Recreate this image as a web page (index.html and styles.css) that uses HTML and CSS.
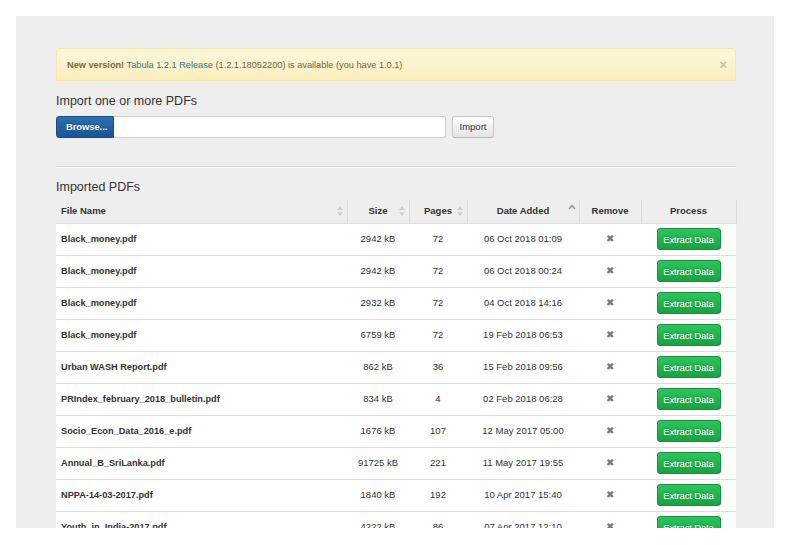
FILE: index.html
```html
<!DOCTYPE html>
<html>
<head>
<meta charset="utf-8">
<link rel="stylesheet" href="styles.css">
</head>
<body>
<div class="panel">
  <div class="alert">
    <span><b>New version!</b> <a class="link">Tabula 1.2.1 Release</a> (1.2.1.18052200) is available (you have 1.0.1)</span>
    <span class="close">×</span>
  </div>
  <h2 class="title">Import one or more PDFs</h2>
  <div class="upload">
    <span class="browse">Browse...</span>
    <span class="filefield"></span>
    <span class="import">Import</span>
  </div>
  <div class="rule"></div>
  <h3 class="subtitle">Imported PDFs</h3>
  <table class="files">
    <colgroup>
      <col class="c-name"><col class="c-size"><col class="c-pages"><col class="c-date"><col class="c-remove"><col class="c-proc">
    </colgroup>
    <thead>
      <tr>
        <th class="left"><span class="hd">File Name</span><svg class="sort" viewBox="0 0 8 12"><path d="M4 1 L7 5 L1 5 Z M4 11 L7 7 L1 7 Z"/></svg></th>
        <th><span class="hd">Size</span><svg class="sort" viewBox="0 0 8 12"><path d="M4 1 L7 5 L1 5 Z M4 11 L7 7 L1 7 Z"/></svg></th>
        <th><span class="hd">Pages</span><svg class="sort" viewBox="0 0 8 12"><path d="M4 1 L7 5 L1 5 Z M4 11 L7 7 L1 7 Z"/></svg></th>
        <th><span class="hd">Date Added</span><svg class="sort up" viewBox="0 0 8 12"><path d="M1 6 L4 2.5 L7 6" /></svg></th>
        <th>Remove</th>
        <th>Process</th>
      </tr>
    </thead>
    <tbody>
      <tr><td class="name">Black_money.pdf</td><td>2942 kB</td><td>72</td><td>06 Oct 2018 01:09</td><td class="x">✖</td><td><span class="extract">Extract Data</span></td></tr>
      <tr><td class="name">Black_money.pdf</td><td>2942 kB</td><td>72</td><td>06 Oct 2018 00:24</td><td class="x">✖</td><td><span class="extract">Extract Data</span></td></tr>
      <tr><td class="name">Black_money.pdf</td><td>2932 kB</td><td>72</td><td>04 Oct 2018 14:16</td><td class="x">✖</td><td><span class="extract">Extract Data</span></td></tr>
      <tr><td class="name">Black_money.pdf</td><td>6759 kB</td><td>72</td><td>19 Feb 2018 06:53</td><td class="x">✖</td><td><span class="extract">Extract Data</span></td></tr>
      <tr><td class="name">Urban WASH Report.pdf</td><td>862 kB</td><td>36</td><td>15 Feb 2018 09:56</td><td class="x">✖</td><td><span class="extract">Extract Data</span></td></tr>
      <tr><td class="name">PRIndex_february_2018_bulletin.pdf</td><td>834 kB</td><td>4</td><td>02 Feb 2018 06:28</td><td class="x">✖</td><td><span class="extract">Extract Data</span></td></tr>
      <tr><td class="name">Socio_Econ_Data_2016_e.pdf</td><td>1676 kB</td><td>107</td><td>12 May 2017 05:00</td><td class="x">✖</td><td><span class="extract">Extract Data</span></td></tr>
      <tr><td class="name">Annual_B_SriLanka.pdf</td><td>91725 kB</td><td>221</td><td>11 May 2017 19:55</td><td class="x">✖</td><td><span class="extract">Extract Data</span></td></tr>
      <tr><td class="name">NPPA-14-03-2017.pdf</td><td>1840 kB</td><td>192</td><td>10 Apr 2017 15:40</td><td class="x">✖</td><td><span class="extract">Extract Data</span></td></tr>
      <tr><td class="name">Youth_in_India-2017.pdf</td><td>4222 kB</td><td>86</td><td>07 Apr 2017 12:10</td><td class="x">✖</td><td><span class="extract">Extract Data</span></td></tr>
    </tbody>
  </table>
</div>
</body>
</html>
```

FILE: styles.css
```css
html, body {
  margin: 0;
  padding: 0;
  background: #ffffff;
}
body {
  padding: 16px;
  font-family: "Liberation Sans", Arial, sans-serif;
  color: #333;
}
.panel {
  width: 680px;
  height: 480px;
  padding: 32px 38px 0 40px;
  background: #eeeeee;
  overflow: hidden;
}
.alert {
  display: flex;
  align-items: center;
  justify-content: space-between;
  height: 31px;
  padding: 0 10px;
  background: linear-gradient(#fcf6db, #f9efbe);
  border: 1px solid #f5e8ad;
  border-radius: 2px;
  font-size: 9.2px;
  color: #6f6646;
}
.alert b {
  color: #7a6a3f;
}
.link {
  color: #3b6fa0;
}
.close {
  color: #c9c2a0;
  font-size: 13px;
  font-weight: bold;
  margin-right: -2px;
}
.title {
  margin: 13px 0 0;
  font-size: 12.5px;
  font-weight: normal;
  line-height: 14px;
  color: #333;
}
.upload {
  display: flex;
  align-items: center;
  margin-top: 7px;
  height: 23px;
}
.browse {
  display: flex;
  align-items: center;
  height: 22px;
  width: 58px;
  box-sizing: border-box;
  padding-left: 9px;
  background: linear-gradient(#2e6fb0, #1b5390);
  border: 1px solid #1a4e86;
  border-radius: 3px 0 0 3px;
  color: #fff;
  font-size: 9.3px;
  font-weight: bold;
  text-shadow: 0 -1px 0 rgba(0,0,0,0.25);
}
.filefield {
  width: 332px;
  height: 22px;
  box-sizing: border-box;
  background: #fff;
  border: 1px solid #cfcfcf;
  border-left: 0;
  border-radius: 0 3px 3px 0;
}
.import {
  display: flex;
  align-items: center;
  justify-content: center;
  margin-left: 6px;
  width: 42px;
  height: 22px;
  box-sizing: border-box;
  background: linear-gradient(#ffffff, #e4e4e4);
  border: 1px solid #c8c8c8;
  border-bottom-color: #b5b5b5;
  border-radius: 3px;
  font-size: 9.5px;
  color: #333;
}
.rule {
  margin-top: 28px;
  height: 0;
  border-top: 1px solid #d8d8d8;
  border-bottom: 1px solid #fafafa;
}
.subtitle {
  margin: 12px 0 0;
  font-size: 12.5px;
  font-weight: normal;
  line-height: 14px;
  color: #333;
}
.files {
  margin-top: 6px;
  width: 680px;
  border-collapse: collapse;
  table-layout: fixed;
  font-size: 9.5px;
}
.c-name { width: 291px; }
.c-size { width: 62px; }
.c-pages { width: 58px; }
.c-date { width: 112px; }
.c-remove { width: 62px; }
.c-proc { width: 95px; }
.files th {
  position: relative;
  height: 23px;
  padding: 0 0 1px;
  box-sizing: border-box;
  border-right: 1px solid #dcdcdc;
  border-bottom: 1px solid #dcdcdc;
  background: #eeeeee;
  font-weight: bold;
  text-align: center;
  color: #333;
}
.files th.left {
  text-align: left;
  padding-left: 5px;
}
.sort {
  position: absolute;
  right: 3px;
  top: 5px;
  width: 8px;
  height: 12px;
  fill: #d0d0d0;
}
.sort.up {
  fill: none;
  stroke: #999;
  stroke-width: 1.6;
  top: 3px;
}
.files td {
  height: 32px;
  padding: 0 0 1px;
  box-sizing: border-box;
  background: #ffffff;
  border-bottom: 1px solid #dddddd;
  text-align: center;
  vertical-align: middle;
  color: #333;
}
.files td.name {
  text-align: left;
  padding-left: 5px;
  font-weight: bold;
  font-size: 9.2px;
  color: #333;
}
.files td.x {
  color: #777;
  font-size: 10px;
}
.extract {
  display: inline-block;
  vertical-align: middle;
  width: 64px;
  height: 22px;
  line-height: 21px;
  box-sizing: border-box;
  background: linear-gradient(#2ec45c, #17a243);
  border: 1px solid #15933c;
  border-radius: 3px;
  color: #fff;
  font-size: 9.6px;
  letter-spacing: -0.2px;
  text-shadow: 0 -1px 0 rgba(0,0,0,0.2);
}
```
